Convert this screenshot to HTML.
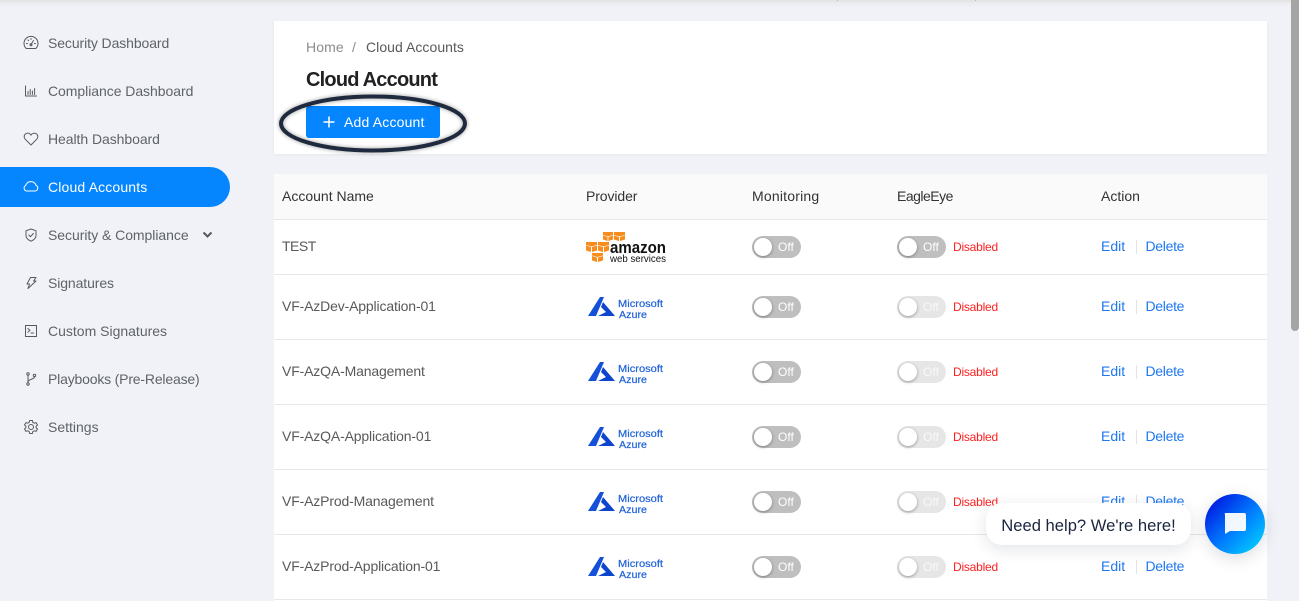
<!DOCTYPE html>
<html><head><meta charset="utf-8"><style>
*{box-sizing:border-box}
html,body{margin:0;padding:0;width:1299px;height:601px;overflow:hidden;background:#f0f2f7;font-family:"Liberation Sans",sans-serif;font-size:14px;color:#595959}
.a{position:absolute;white-space:nowrap}
.nav{position:absolute;left:48px;line-height:20px;color:#5f6368;white-space:nowrap}
.ic{position:absolute;left:23px;width:16px;height:16px;fill:none;stroke:#595959;stroke-width:1;stroke-linecap:round;stroke-linejoin:round}
.line{position:absolute;left:274px;width:993px;height:1px;background:#e8e8e8}
.cell{position:absolute;white-space:nowrap;line-height:20px}
.r{letter-spacing:-.15px}
.sw{position:absolute;width:49px;height:22px;border-radius:11px;background:#bfbfbf;color:#fff;font-size:12px;line-height:22px;padding-left:26px}
.sw:before{content:"";position:absolute;left:2px;top:2px;width:18px;height:18px;border-radius:50%;background:#fff;box-shadow:0 1px 3px rgba(0,0,0,.35)}
.sw.d{background:#e6e6e6;color:#f8f8f8}
.dis{position:absolute;left:953px;color:#ff2020;font-size:12px;line-height:20px;letter-spacing:-.22px}
.lk{position:absolute;color:#1f78f2;line-height:20px}
.del{letter-spacing:-.3px;left:1145.500px}
.sep{position:absolute;left:1136px;width:1px;height:14px;background:#e4e4e4}
.az{position:absolute;left:588px;width:78px;height:24px}
.az text{font-family:"Liberation Sans",sans-serif;font-size:10px;fill:#1f62d8;stroke:#1f62d8;stroke-width:.2px}
</style></head><body>
<div class="a" style="left:0;top:0;width:1299px;height:2px;background:#e4e4e4"></div>
<div class="a" style="left:0;top:2px;width:1299px;height:6px;background:linear-gradient(#e9ebef,#f0f2f7)"></div>
<div class="a" style="left:837px;top:0;width:1px;height:1px;background:#bbb"></div>
<div class="a" style="left:975px;top:0;width:1px;height:1px;background:#bbb"></div>
<div class="a" style="left:1291px;top:0;width:8px;height:331px;background:#a5a5a5;border-radius:0 0 4px 4px"></div>

<svg class="ic" style="top:35px" viewBox="0 0 16 16"><path d="M3.200 13.500A7 7 0 1 1 12.800 13.500Z"/><path d="M8 9.500L10.500 5.500M3.500 8.500H4.500M5 5L5.600 5.600M8 3.500V4.500M11.500 8.500H12.500"/><circle cx="8" cy="9.800" r="1"/></svg>
<div class="nav" style="top:33px;letter-spacing:-.1px">Security Dashboard</div>
<svg class="ic" style="top:83px" viewBox="0 0 16 16"><path d="M2.500 3V13H13.500M5 11.500V8.500M7.200 11.500V6.500M9.400 11.500V8M11.600 11.500V5.500"/></svg>
<div class="nav" style="top:81px;letter-spacing:-.05px">Compliance Dashboard</div>
<svg class="ic" style="top:131px" viewBox="0 0 16 16"><path d="M8 14L2.200 8.200A3.700 3.700 0 0 1 2 3.300A3.700 3.700 0 0 1 8 4.200A3.700 3.700 0 0 1 14 3.300A3.700 3.700 0 0 1 13.800 8.200Z"/></svg>
<div class="nav" style="top:129px;letter-spacing:-.06px">Health Dashboard</div>

<div class="a" style="left:0;top:167px;width:230px;height:40px;background:#0586ff;border-radius:0 20px 20px 0"></div>
<svg class="ic" style="top:179px;stroke:#fff" viewBox="0 0 16 16"><path d="M4 13A3 3 0 0 1 2.800 7.300A5.400 5.400 0 0 1 13 7.300A3 3 0 0 1 12 13Z" transform="translate(0 -1)"/></svg>
<div class="nav" style="top:177px;color:#fff;letter-spacing:.15px">Cloud Accounts</div>

<svg class="ic" style="top:227px" viewBox="0 0 16 16"><path d="M8 2L13 3.800V8.500C13 11.300 10.300 13.200 8 14.200C5.700 13.200 3 11.300 3 8.500V3.800Z"/><path d="M5.800 8L7.500 9.700L10.300 6.500"/></svg>
<div class="nav" style="top:225px;letter-spacing:-.05px">Security &amp; Compliance</div>
<svg class="a" style="left:202px;top:231px" width="11" height="8" viewBox="0 0 11 8"><path d="M1.500 1.500L5.500 5.500L9.500 1.500" fill="none" stroke="#595959" stroke-width="2"/></svg>
<svg class="ic" style="top:275px" viewBox="0 0 16 16"><path d="M7.500 2.500H13L10.500 6H13L5 13.500L6.500 9H4Z"/></svg>
<div class="nav" style="top:273px;letter-spacing:-.1px">Signatures</div>
<svg class="ic" style="top:323px" viewBox="0 0 16 16"><rect x="2.500" y="2.500" width="11" height="11"/><path d="M4.800 5.500L7 7.300L4.800 9.200M8 10H10.500"/></svg>
<div class="nav" style="top:321px">Custom Signatures</div>
<svg class="ic" style="top:371px" viewBox="0 0 16 16"><circle cx="5" cy="3" r="1.200"/><circle cx="5" cy="13" r="1.200"/><circle cx="11.500" cy="4.500" r="1.200"/><path d="M5 4.200V11.800M11.500 5.700C11.500 8.500 5 8 5 11"/></svg>
<div class="nav" style="top:369px;letter-spacing:-.18px">Playbooks (Pre-Release)</div>
<svg class="ic" style="top:419px" viewBox="0 0 16 16"><path d="M6.600 1.500H9.400L9.800 3.400L11.300 4.200L13.100 3.600L14.500 6L13.100 7.300V8.700L14.500 10L13.100 12.400L11.300 11.800L9.800 12.600L9.400 14.500H6.600L6.200 12.600L4.700 11.800L2.900 12.400L1.500 10L2.900 8.700V7.300L1.500 6L2.900 3.600L4.700 4.200L6.200 3.400Z"/><circle cx="8" cy="8" r="2.500"/></svg>
<div class="nav" style="top:417px">Settings</div>

<div class="a" style="left:274px;top:21px;width:993px;height:133px;background:#fff;box-shadow:0 1px 4px rgba(0,0,0,.04)"></div>
<div class="cell" style="left:306px;top:37px;color:#8c8c8c;letter-spacing:.1px">Home</div>
<div class="cell" style="left:352px;top:37px;color:#8c8c8c">/</div>
<div class="cell" style="left:366px;top:37px;color:#595959;letter-spacing:.05px">Cloud Accounts</div>
<div class="cell" style="left:306px;top:67px;font-size:20px;font-weight:bold;line-height:26px;color:#212121;letter-spacing:-.8px">Cloud Account</div>
<div class="a" style="left:306px;top:106px;width:134px;height:32px;background:#0586ff;border-radius:3px"></div>
<svg class="a" style="left:323px;top:116px" width="12" height="12" viewBox="0 0 12 12"><path d="M6 .5V11.500M.5 6H11.500" stroke="#fff" stroke-width="1.500"/></svg>
<div class="cell" style="left:344px;top:112px;color:#fff;letter-spacing:.18px">Add Account</div>
<svg class="a" style="left:274px;top:90px" width="200" height="66" viewBox="0 0 200 66"><ellipse cx="99" cy="33.500" rx="92" ry="27" fill="none" stroke="#1f2a3f" stroke-width="4" style="filter:drop-shadow(0 0 2px rgba(0,0,0,.4))"/></svg>

<div class="a" style="left:274px;top:174px;width:993px;height:427px;background:#fff"></div>
<div class="a" style="left:274px;top:174px;width:993px;height:45px;background:#fafafa"></div>
<div class="cell" style="left:282px;top:186px;color:#333">Account Name</div>
<div class="cell" style="left:586px;top:186px;color:#333;letter-spacing:-.1px">Provider</div>
<div class="cell" style="left:752px;top:186px;color:#333;letter-spacing:.2px">Monitoring</div>
<div class="cell" style="left:897px;top:186px;color:#333;letter-spacing:-.5px">EagleEye</div>
<div class="cell" style="left:1101px;top:186px;color:#333">Action</div>
<div class="line" style="top:219px"></div>
<div class="line" style="top:274px"></div>
<div class="line" style="top:339px"></div>
<div class="line" style="top:404px"></div>
<div class="line" style="top:469px"></div>
<div class="line" style="top:534px"></div>
<div class="line" style="top:599px"></div>

<div class="cell" style="left:282px;top:236px;letter-spacing:-.5px">TEST</div>
<svg class="a" style="left:585px;top:231px" width="84" height="33" viewBox="0 0 84 33">
<g fill="#f68d1e"><path d="M18 1h10v3l-5 1.500-5-1.500zM18 4.500l4.600 1.500V10L18 8.500zM23.400 6L28 4.500V8.500L23.400 10z"/><path d="M29 1h11v3l-5.500 1.500L29 4zM29 4.500l5 1.500V10l-5-1.500zM35 6l5-1.500V8.500L35 10z"/><path d="M1 11h11v3l-5.500 1.500L1 14zM1 14.500l5 1.500V21l-5-1.500zM7 16l5-1.500v5L7 21z"/><path d="M13 11h11v3l-5.500 1.500L13 14zM13 14.500l5 1.500V21l-5-1.500zM19 16l5-1.500v5L19 21z"/><path d="M7 22h11v2.500L12.500 26 7 24.500zM7 25l5 1.500V31l-5-1.500zM13 26.500l5-1.500v4.500L13 31z"/></g>
<text x="25" y="22" font-family="Liberation Sans" font-weight="bold" font-size="17" fill="#111" textLength="56" lengthAdjust="spacingAndGlyphs">amazon</text>
<text x="25" y="31" font-family="Liberation Sans" font-size="10" fill="#111" textLength="56" lengthAdjust="spacingAndGlyphs">web services</text>
</svg>
<div class="sw" style="left:752px;top:236px">Off</div>
<div class="sw" style="left:897px;top:236px">Off</div>
<div class="dis" style="top:237px">Disabled</div>
<div class="lk" style="left:1101px;top:236px">Edit</div><div class="sep" style="top:240px"></div><div class="lk del" style="top:236px">Delete</div>

<div class="cell r" style="left:282px;top:296px">VF-AzDev-Application-01</div>
<svg class="az" style="top:296px" viewBox="0 0 78 24"><path d="M12 1H16L8 20H0Z" fill="#1450d8"/><path d="M15 6L27 20H10L18 16L13 11Z" fill="#0d45cf"/><text x="30" y="11" textLength="45" lengthAdjust="spacingAndGlyphs">Microsoft</text><text x="31" y="22" textLength="28" lengthAdjust="spacingAndGlyphs">Azure</text></svg>
<div class="sw" style="left:752px;top:296px">Off</div>
<div class="sw d" style="left:897px;top:296px">Off</div>
<div class="dis" style="top:297px">Disabled</div>
<div class="lk" style="left:1101px;top:296px">Edit</div><div class="sep" style="top:300px"></div><div class="lk del" style="top:296px">Delete</div>

<div class="cell r" style="left:282px;top:361px">VF-AzQA-Management</div>
<svg class="az" style="top:361px" viewBox="0 0 78 24"><path d="M12 1H16L8 20H0Z" fill="#1450d8"/><path d="M15 6L27 20H10L18 16L13 11Z" fill="#0d45cf"/><text x="30" y="11" textLength="45" lengthAdjust="spacingAndGlyphs">Microsoft</text><text x="31" y="22" textLength="28" lengthAdjust="spacingAndGlyphs">Azure</text></svg>
<div class="sw" style="left:752px;top:361px">Off</div>
<div class="sw d" style="left:897px;top:361px">Off</div>
<div class="dis" style="top:362px">Disabled</div>
<div class="lk" style="left:1101px;top:361px">Edit</div><div class="sep" style="top:365px"></div><div class="lk del" style="top:361px">Delete</div>

<div class="cell r" style="left:282px;top:426px">VF-AzQA-Application-01</div>
<svg class="az" style="top:426px" viewBox="0 0 78 24"><path d="M12 1H16L8 20H0Z" fill="#1450d8"/><path d="M15 6L27 20H10L18 16L13 11Z" fill="#0d45cf"/><text x="30" y="11" textLength="45" lengthAdjust="spacingAndGlyphs">Microsoft</text><text x="31" y="22" textLength="28" lengthAdjust="spacingAndGlyphs">Azure</text></svg>
<div class="sw" style="left:752px;top:426px">Off</div>
<div class="sw d" style="left:897px;top:426px">Off</div>
<div class="dis" style="top:427px">Disabled</div>
<div class="lk" style="left:1101px;top:426px">Edit</div><div class="sep" style="top:430px"></div><div class="lk del" style="top:426px">Delete</div>

<div class="cell r" style="left:282px;top:491px">VF-AzProd-Management</div>
<svg class="az" style="top:491px" viewBox="0 0 78 24"><path d="M12 1H16L8 20H0Z" fill="#1450d8"/><path d="M15 6L27 20H10L18 16L13 11Z" fill="#0d45cf"/><text x="30" y="11" textLength="45" lengthAdjust="spacingAndGlyphs">Microsoft</text><text x="31" y="22" textLength="28" lengthAdjust="spacingAndGlyphs">Azure</text></svg>
<div class="sw" style="left:752px;top:491px">Off</div>
<div class="sw d" style="left:897px;top:491px">Off</div>
<div class="dis" style="top:492px">Disabled</div>
<div class="lk" style="left:1101px;top:491px">Edit</div><div class="sep" style="top:495px"></div><div class="lk del" style="top:491px">Delete</div>

<div class="cell r" style="left:282px;top:556px">VF-AzProd-Application-01</div>
<svg class="az" style="top:556px" viewBox="0 0 78 24"><path d="M12 1H16L8 20H0Z" fill="#1450d8"/><path d="M15 6L27 20H10L18 16L13 11Z" fill="#0d45cf"/><text x="30" y="11" textLength="45" lengthAdjust="spacingAndGlyphs">Microsoft</text><text x="31" y="22" textLength="28" lengthAdjust="spacingAndGlyphs">Azure</text></svg>
<div class="sw" style="left:752px;top:556px">Off</div>
<div class="sw d" style="left:897px;top:556px">Off</div>
<div class="dis" style="top:557px">Disabled</div>
<div class="lk" style="left:1101px;top:556px">Edit</div><div class="sep" style="top:560px"></div><div class="lk del" style="top:556px">Delete</div>

<div class="a" style="left:986px;top:503px;width:205px;height:42px;background:#fff;border-radius:16px;box-shadow:0 4px 16px rgba(20,30,60,.12);color:#1c2540;font-size:16.600px;line-height:45px;text-align:center">Need help? We're here!</div>
<div class="a" style="left:1205px;top:494px;width:60px;height:60px;border-radius:50%;background:linear-gradient(135deg,#0018e0 10%,#0080ff 55%,#00d4ff 95%);box-shadow:0 4px 16px rgba(20,30,60,.15)"></div>
<svg class="a" style="left:1223px;top:512px" width="24" height="24" viewBox="0 0 24 24"><path d="M3 1H21Q23 1 23 3V17Q23 19 21 19H7L2 22V3Q1 1 3 1Z" fill="#fff" opacity=".95"/></svg>
</body></html>
